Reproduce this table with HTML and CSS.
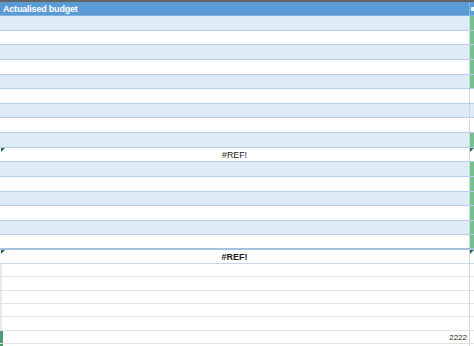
FILE: index.html
```html
<!DOCTYPE html>
<html>
<head>
<meta charset="utf-8">
<link rel="stylesheet" href="styles.css">
</head>
<body>
<div class="topbar"></div>
<div class="row hdr"><div class="main">Actualised budget</div><div class="side"><span class="sq"></span></div></div>
<div class="row u b"><div class="main"></div><div class="side g"></div></div>
<div class="row u w"><div class="main"></div><div class="side g"></div></div>
<div class="row u b"><div class="main"></div><div class="side g"></div></div>
<div class="row u w"><div class="main"></div><div class="side g"></div></div>
<div class="row u b"><div class="main"></div><div class="side g"></div></div>
<div class="row u w"><div class="main"></div><div class="side"></div></div>
<div class="row u b"><div class="main"></div><div class="side"></div></div>
<div class="row u w"><div class="main"></div><div class="side"></div></div>
<div class="row u b"><div class="main"></div><div class="side g"></div></div>
<div class="row u w"><div class="main tri ctr">#REF!</div><div class="side tri"></div></div>
<div class="row u b"><div class="main"></div><div class="side g"></div></div>
<div class="row u w"><div class="main"></div><div class="side g"></div></div>
<div class="row u b"><div class="main"></div><div class="side g"></div></div>
<div class="row u w"><div class="main"></div><div class="side g"></div></div>
<div class="row u b"><div class="main"></div><div class="side g"></div></div>
<div class="row u w last"><div class="main"></div><div class="side g"></div></div>
<div class="row ref"><div class="main tri ctr bold">#REF!</div><div class="side tri"></div></div>
<div class="row lo"><div class="main"></div><div class="side"></div></div>
<div class="row lo"><div class="main"></div><div class="side"></div></div>
<div class="row lo"><div class="main"></div><div class="side"></div></div>
<div class="row lo"><div class="main"></div><div class="side"></div></div>
<div class="row lo"><div class="main"></div><div class="side"></div></div>
<div class="row lo"><div class="main lg num">2222</div><div class="side"></div></div>
<div class="row lo"><div class="main lg"></div><div class="side"></div></div>
</body>
</html>
```
FILE: styles.css
```css
html, body {
  margin: 0;
  padding: 0;
}
body {
  width: 474px;
  height: 346px;
  overflow: hidden;
  background: #ffffff;
  font-family: "Liberation Sans", Arial, sans-serif;
  color: #1a1a1a;
}
.topbar {
  height: 2px;
  background: #646464;
}
.row {
  display: grid;
  grid-template-columns: 469px 5px;
  box-sizing: border-box;
}
.main {
  position: relative;
  white-space: nowrap;
  overflow: hidden;
}
.side {
  position: relative;
  border-left: 1px solid #cfd5dc;
}
.side.g {
  background: #72c28f;
}
.hdr {
  height: 14px;
  background: #5b9bd5;
  color: #ffffff;
  font-weight: bold;
  font-size: 9px;
  line-height: 14px;
  border-bottom: 1px solid #7fb0e0;
}
.hdr .main {
  padding-left: 3px;
  letter-spacing: -0.2px;
}
.hdr .side {
  border-left: 1px solid #8db8e4;
}
.sq {
  position: absolute;
  left: 1px;
  top: 5px;
  width: 3px;
  height: 4px;
  background: #e8f2fc;
}
.u {
  height: 14.625px;
  border-bottom: 1px solid #b9cde6;
  font-size: 8.8px;
  line-height: 15px;
}
.u.b {
  background: #ddebf7;
}
.u.w {
  background: #ffffff;
}
.u.last {
  border-bottom: 2px solid #a7c2e1;
}
.ctr {
  text-align: center;
}
.bold {
  font-weight: bold;
  font-size: 9px;
}
.ref {
  height: 14px;
  border-bottom: 1px solid #c9d6e8;
  line-height: 15px;
  font-size: 9px;
}
.lo {
  height: 13.33px;
  border-bottom: 1px solid #e2e2e2;
  font-size: 8px;
  line-height: 14px;
}
.lo .main {
  border-left: 2px solid #e8e8e8;
}
.lo .main.lg {
  border-left: 3px solid #4f9a6e;
}
.num {
  text-align: right;
  padding-right: 2px;
  color: #2a2a2a;
}
.tri::before {
  content: "";
  position: absolute;
  left: 1px;
  top: 0;
  width: 0;
  height: 0;
  border-top: 4px solid #1f6b3f;
  border-right: 4px solid transparent;
}
.side.tri::before {
  left: 0;
}
```
